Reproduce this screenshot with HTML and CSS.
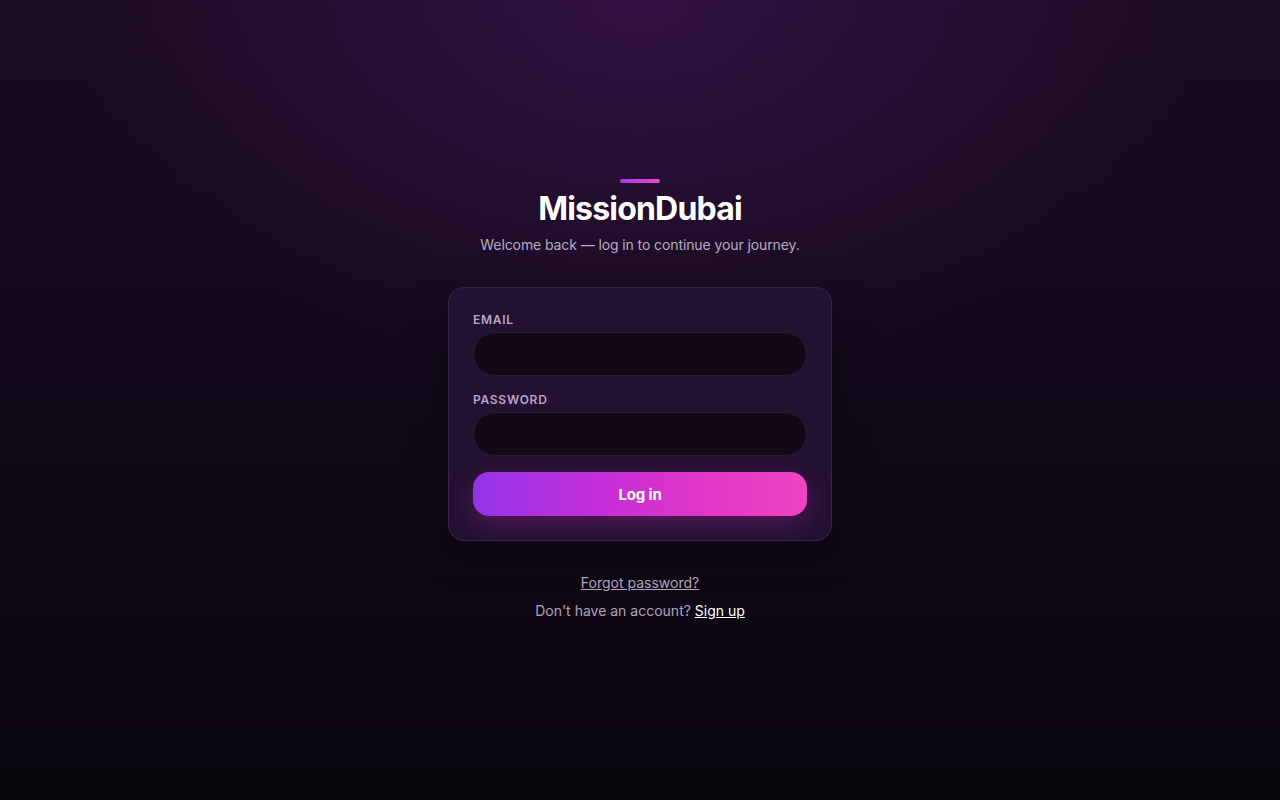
FILE: index.html
```html
<!DOCTYPE html>
<html lang="en">
<head>
<meta charset="utf-8">
<title>MissionDubai — Log in</title>
<link rel="stylesheet" href="styles.css">
</head>
<body>
<main class="page">
  <div class="wrap">
    <header class="brand">
      <span class="accent"></span>
      <h1 class="title">MissionDubai</h1>
      <p class="subtitle">Welcome back — log in to continue your journey.</p>
    </header>
    <form class="card">
      <label class="field">
        <span class="label">Email</span>
        <input class="input" type="email">
      </label>
      <label class="field">
        <span class="label">Password</span>
        <input class="input" type="password">
      </label>
      <button class="btn" type="button">Log in</button>
    </form>
    <div class="links">
      <a class="forgot" href="#">Forgot password?</a>
      <p class="signup">Don't have an account? <a href="#">Sign up</a></p>
    </div>
  </div>
</main>
</body>
</html>
```
FILE: styles.css
```css
* { box-sizing: border-box; }
html, body { margin: 0; padding: 0; }
body {
  font-family: Inter, "Noto Sans", sans-serif;
  color: #fff;
  min-height: 100vh;
  background:
    radial-gradient(ellipse 560px 380px at 50% 0%, rgba(58, 20, 78, 0.75), rgba(58, 20, 78, 0) 100%),
    linear-gradient(180deg, #1b0b23 0%, #140a1b 45%, #09060e 100%);
}
.page {
  min-height: 100vh;
  display: flex;
  align-items: center;
  justify-content: center;
}
.wrap {
  width: 384px;
  display: flex;
  flex-direction: column;
  align-items: stretch;
}
.brand {
  display: flex;
  flex-direction: column;
  align-items: center;
  text-align: center;
}
.accent {
  width: 40px;
  height: 4px;
  border-radius: 2px;
  background: linear-gradient(90deg, #a23be6, #ec4ac4);
}
.title {
  margin: 6px 0 0;
  font-size: 32px;
  line-height: 40px;
  font-weight: 700;
  letter-spacing: -0.025em;
  color: #fff;
}
.subtitle {
  margin: 6px 0 0;
  font-size: 14px;
  line-height: 20px;
  letter-spacing: -0.1px;
  color: #b9a9c5;
}
.card {
  margin-top: 32px;
  padding: 24px;
  border-radius: 16px;
  background: #221131;
  border: 1px solid #3a2450;
  display: flex;
  flex-direction: column;
  gap: 16px;
  box-shadow: 0 10px 40px rgba(0, 0, 0, 0.25);
}
.field {
  display: flex;
  flex-direction: column;
  gap: 4px;
}
.label {
  font-size: 12px;
  line-height: 16px;
  font-weight: 600;
  letter-spacing: 0.06em;
  text-transform: uppercase;
  color: #b8a4c5;
}
.input {
  height: 44px;
  border-radius: 22px;
  background: #120914;
  border: 1px solid #2c1a3a;
  color: #fff;
  padding: 0 16px;
  font: inherit;
  outline: none;
}
.btn {
  height: 44px;
  border: 0;
  border-radius: 16px;
  background: linear-gradient(90deg, #9334ea 0%, #c72fd6 40%, #e236c4 70%, #f043c3 100%);
  color: #fff;
  font-family: inherit;
  font-size: 15px;
  font-weight: 700;
  letter-spacing: -0.01em;
  box-shadow: 0 8px 24px rgba(220, 50, 190, 0.28);
  cursor: pointer;
}
.links {
  margin-top: 32px;
  display: flex;
  flex-direction: column;
  align-items: center;
  gap: 8px;
  font-size: 14px;
  line-height: 20px;
}
.forgot {
  color: #b3a3bf;
  text-decoration: underline;
}
.signup {
  margin: 0;
  color: #b3a3bf;
}
.signup a {
  color: #fff;
  text-decoration: underline;
}
```
